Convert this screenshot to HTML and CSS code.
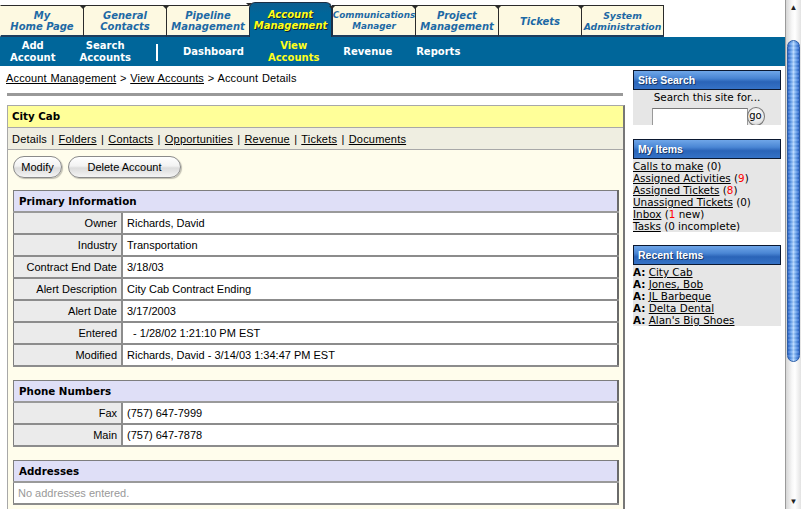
FILE: index.html
```html
<!DOCTYPE html>
<html>
<head>
<meta charset="utf-8">
<title>Account Details</title>
<link rel="stylesheet" href="styles.css">
</head>
<body>
<div class="window">
  <div class="page">
    <nav class="tabs">
      <a class="tab"><span>My<br>Home Page</span></a>
      <a class="tab"><span>General<br>Contacts</span></a>
      <a class="tab"><span>Pipeline<br>Management</span></a>
      <a class="tab active"><span>Account<br>Management</span></a>
      <a class="tab tab-small"><span>Communications<br>Manager</span></a>
      <a class="tab"><span>Project<br>Management</span></a>
      <a class="tab"><span>Tickets</span></a>
      <a class="tab tab-sys"><span>System<br>Administration</span></a>
    </nav>
    <div class="subnav">
      <a class="sub">Add<br>Account</a>
      <a class="sub">Search<br>Accounts</a>
      <span class="sub-divider"></span>
      <a class="sub">Dashboard</a>
      <a class="sub current">View<br>Accounts</a>
      <a class="sub">Revenue</a>
      <a class="sub">Reports</a>
    </div>
    <div class="content">
      <div class="main">
        <div class="crumbs"><a>Account Management</a> &gt; <a>View Accounts</a> &gt; Account Details</div>
        <div class="rule"></div>
        <div class="box">
          <div class="box-title">City Cab</div>
          <div class="box-tabs">Details | <a>Folders</a> | <a>Contacts</a> | <a>Opportunities</a> | <a>Revenue</a> | <a>Tickets</a> | <a>Documents</a></div>
          <div class="box-body">
            <div class="buttons">
              <button class="pill pill-modify">Modify</button>
              <button class="pill pill-delete">Delete Account</button>
            </div>
            <table class="info">
              <tr><th colspan="2">Primary Information</th></tr>
              <tr><td class="label">Owner</td><td>Richards, David</td></tr>
              <tr><td class="label">Industry</td><td>Transportation</td></tr>
              <tr><td class="label">Contract End Date</td><td>3/18/03</td></tr>
              <tr><td class="label">Alert Description</td><td>City Cab Contract Ending</td></tr>
              <tr><td class="label">Alert Date</td><td>3/17/2003</td></tr>
              <tr><td class="label">Entered</td><td>&nbsp;&nbsp;- 1/28/02 1:21:10 PM EST</td></tr>
              <tr><td class="label">Modified</td><td>Richards, David - 3/14/03 1:34:47 PM EST</td></tr>
            </table>
            <table class="info">
              <tr><th colspan="2">Phone Numbers</th></tr>
              <tr><td class="label">Fax</td><td>(757) 647-7999</td></tr>
              <tr><td class="label">Main</td><td>(757) 647-7878</td></tr>
            </table>
            <table class="info">
              <tr><th>Addresses</th></tr>
              <tr><td class="empty">No addresses entered.</td></tr>
            </table>
          </div>
        </div>
      </div>
      <aside class="sidebar">
        <div class="panel-head">Site Search</div>
        <div class="panel-search">
          <div class="search-label">Search this site for...</div>
          <div class="search-row">
            <span class="search-input"></span>
            <span class="go">go</span>
          </div>
        </div>
        <div class="panel-head">My Items</div>
        <ul class="panel-list">
          <li><a>Calls to make</a> (0)</li>
          <li><a>Assigned Activities</a> (<span class="red">9</span>)</li>
          <li><a>Assigned Tickets</a> (<span class="red">8</span>)</li>
          <li><a>Unassigned Tickets</a> (0)</li>
          <li><a>Inbox</a> (<span class="red">1</span> new)</li>
          <li><a>Tasks</a> (0 incomplete)</li>
        </ul>
        <div class="panel-head">Recent Items</div>
        <ul class="panel-list">
          <li><b>A:</b> <a>City Cab</a></li>
          <li><b>A:</b> <a>Jones, Bob</a></li>
          <li><b>A:</b> <a>JL Barbeque</a></li>
          <li><b>A:</b> <a>Delta Dental</a></li>
          <li><b>A:</b> <a>Alan's Big Shoes</a></li>
        </ul>
      </aside>
    </div>
  </div>
  <div class="scrollbar">
    <div class="sb-arrow sb-up">&#9650;</div>
    <div class="sb-track">
      <div class="sb-thumb"></div>
    </div>
    <div class="sb-arrow sb-down">&#9660;</div>
  </div>
</div>
</body>
</html>
```

FILE: styles.css
```css
html, body {
  margin: 0;
  padding: 0;
  overflow: hidden;
  background: #fff;
  height: 509px;
}
body {
  font-family: "Liberation Sans", Arial, sans-serif;
  font-size: 11px;
  color: #000;
}
a { color: #000; text-decoration: underline; }

.window {
  display: flex;
  width: 801px;
  height: 509px;
}
.page {
  width: 785px;
  flex: none;
}

/* ---------- top tabs ---------- */
.tabs {
  display: flex;
  align-items: flex-end;
  height: 37px;
}
.tab {
  position: relative;
  box-sizing: border-box;
  width: 83px;
  height: 32px;
  border-left: 1px solid #2b2b2b;
  border-top: 1px solid #2b2b2b;
  border-bottom: 2px solid #1e3d5c;
  background: #fdf9e1;
  display: flex;
  align-items: center;
  justify-content: center;
  text-align: center;
  font-family: "DejaVu Sans", Verdana, sans-serif;
  font-weight: bold;
  font-style: italic;
  font-size: 10px;
  line-height: 11px;
  color: #1d69a5;
  text-decoration: none;
  padding-top: 1px;
}
.tab:first-child { border-left-color: #fdf9e1; }
.tab:last-child { border-right: 1px solid #2b2b2b; }
.tab::before {
  content: "";
  position: absolute;
  left: -4px;
  top: 0;
  border-left: 3px solid transparent;
  border-right: 3px solid transparent;
  border-top: 3px solid #2b2b2b;
}
.tab:first-child::before { display: none; }
.tab-small { font-size: 8.8px; }
.tab-sys { font-size: 9.3px; }
.tab.active {
  height: 35px;
  background: linear-gradient(#0d5f90, #00669a 30%);
  border: 1px solid #1b2f44;
  border-bottom: none;
  border-radius: 6px 6px 0 0;
  color: #ffff1a;
  text-shadow: 1px 1px 0 #0a2038;
  padding-top: 0;
}
.tab.active + .tab { border-left-color: #1b2f44; }

/* ---------- sub nav ---------- */
.subnav {
  display: flex;
  align-items: center;
  gap: 24px;
  height: 29px;
  padding-left: 10px;
  padding-top: 1px;
  box-sizing: border-box;
  background: #00669a;
  font-family: "DejaVu Sans", Verdana, sans-serif;
  font-weight: bold;
  font-size: 10px;
  line-height: 12px;
}
.sub {
  color: #fff;
  text-decoration: none;
  text-align: center;
}
.sub.current { color: #ffff1a; }
.sub-divider {
  width: 2px;
  height: 17px;
  background: #fff;
  margin: 0 1px;
}

/* ---------- content ---------- */
.content {
  display: flex;
  gap: 8px;
}
.main {
  width: 618px;
  padding-left: 7px;
  flex: none;
}
.crumbs {
  margin-top: 6px;
  line-height: 13px;
  margin-left: -1px;
  letter-spacing: 0.15px;
  word-spacing: 0.5px;
}
.rule {
  margin-top: 8px;
  width: 616px;
  height: 3px;
  background: #999;
}
.box {
  margin-top: 9px;
  box-sizing: border-box;
  width: 618px;
  border-top: 1px solid #a8a8a8;
  border-left: 1px solid #a8a8a8;
  border-right: 2px solid #777;
  background: #fffdec;
  height: 420px;
}
.box-title {
  height: 21px;
  line-height: 21px;
  background: #ffff99;
  border-bottom: 1px solid #a8a8a8;
  padding-left: 4px;
  font-family: "DejaVu Sans", Verdana, sans-serif;
  font-weight: bold;
  font-size: 10.3px;
}
.box-tabs {
  height: 21px;
  line-height: 22px;
  background: #efeee1;
  border-bottom: 1px solid #a8a8a8;
  padding-left: 4px;
  letter-spacing: 0.2px;
  word-spacing: 1px;
}
.box-body {
  padding: 6px 4px 0 5px;
}
.buttons {
  display: flex;
  gap: 6px;
  height: 22px;
  margin-bottom: 12px;
}
.pill {
  box-sizing: border-box;
  height: 22px;
  border: 1px solid #8a8a8a;
  border-radius: 11px;
  background: linear-gradient(#ffffff 0%, #f2f2f2 45%, #dcdcdc 55%, #f4f4f4 100%);
  font-family: "Liberation Sans", Arial, sans-serif;
  font-size: 11px;
  color: #000;
  padding: 0;
  box-shadow: 1px 1px 1px rgba(0,0,0,0.25);
}
.pill-modify { width: 49px; }
.pill-delete { width: 113px; }

.info {
  width: 606px;
  border-collapse: collapse;
  background: #fff;
  border-top: 1px solid #7e7e7e;
  border-left: 1px solid #7e7e7e;
  border-right: 2px solid #6a6a6a;
  border-bottom: 2px solid #6a6a6a;
  margin-bottom: 13px;
}
.info th, .info td {
  height: 20px;
  padding: 0 4px;
  border-bottom: 2px solid #8c8c8c;
  font-size: 11px;
  white-space: nowrap;
}
.info th {
  background: #dfdff7;
  text-align: left;
  padding-left: 5px;
  font-family: "DejaVu Sans", Verdana, sans-serif;
  font-weight: bold;
  font-size: 10.3px;
  border-bottom: 2px solid #9a9a9a;
}
.info td.label {
  width: 99px;
  background: #ebebeb;
  text-align: right;
  border-right: 2px solid #8c8c8c;
}
.info td.empty {
  color: #999;
}

/* ---------- sidebar ---------- */
.sidebar {
  width: 148px;
  flex: none;
  padding-top: 4px;
  font-family: "DejaVu Sans", Verdana, sans-serif;
  font-size: 10.4px;
}
.panel-head {
  box-sizing: border-box;
  height: 20px;
  line-height: 18px;
  border: 1px solid #0b1830;
  background: linear-gradient(#6fa6e8 0%, #4a86d4 40%, #2a64b8 60%, #3572c6 100%);
  color: #fff;
  padding-left: 4px;
  font-family: "Liberation Sans", Arial, sans-serif;
  font-weight: bold;
  font-size: 10.5px;
  text-shadow: 1px 1px 0 #1d3a66;
}
.panel-search {
  height: 35px;
  background: #e6e6e6;
  overflow: hidden;
  text-align: center;
  margin-bottom: 14px;
}
.search-label {
  line-height: 13px;
  padding-top: 1px;
}
.search-row {
  display: flex;
  justify-content: center;
  align-items: flex-start;
  margin-top: 3px;
  padding-left: 2px;
}
.search-input {
  width: 94px;
  height: 22px;
  background: #fff;
  border: 1px solid #999;
  border-top-color: #777;
  margin-top: 1px;
}
.go {
  box-sizing: border-box;
  width: 18px;
  height: 19px;
  border: 1px solid #777;
  border-radius: 50%;
  background: radial-gradient(circle at 50% 35%, #ffffff 0%, #e8e8e8 60%, #bdbdbd 100%);
  font-size: 10px;
  line-height: 16px;
  text-align: center;
  margin-left: -1px;
}
.panel-list {
  list-style: none;
  margin: 0 0 13px 0;
  padding: 1px 0 0 0;
  background: #e6e6e6;
  line-height: 12px;
}
.panel-list li { white-space: nowrap; }
.red { color: #f00; }

/* ---------- scrollbar (window chrome) ---------- */
.scrollbar {
  width: 16px;
  flex: none;
  height: 509px;
  box-sizing: border-box;
  border-left: 1px solid #9a9a9a;
  background: linear-gradient(90deg, #d6d6d6, #f7f7f7 40%, #ffffff 60%, #e2e2e2);
  display: flex;
  flex-direction: column;
}
.sb-arrow {
  height: 15px;
  font-size: 8px;
  line-height: 15px;
  text-align: center;
  color: #222;
}
.sb-track {
  flex: 1;
  padding: 25px 1px 0 1px;
}
.sb-thumb {
  height: 320px;
  border-radius: 7px;
  border: 1px solid #2d5fa8;
  background:
    repeating-linear-gradient(0deg, rgba(255,255,255,0.12) 0 2px, rgba(0,0,0,0.04) 2px 4px),
    linear-gradient(90deg, #2a66cc 0%, #6fa8f0 30%, #b2d6ff 50%, #6fa8f0 70%, #2a66cc 100%);
}
```
